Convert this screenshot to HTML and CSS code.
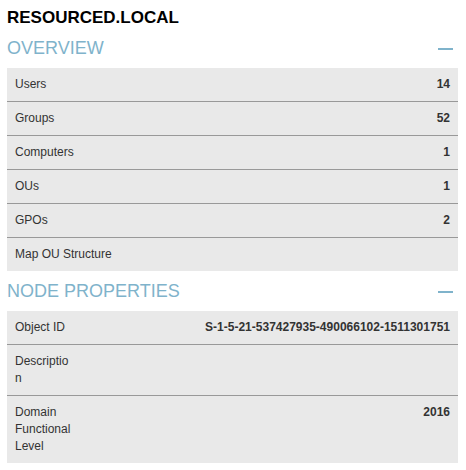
FILE: index.html
```html
<!DOCTYPE html>
<html>
<head>
<meta charset="utf-8">
<link rel="stylesheet" href="styles.css">
</head>
<body>
<div class="panel">
  <h3 class="title">RESOURCED.LOCAL</h3>
  <div class="section-head">
    <span class="section-title">OVERVIEW</span>
    <span class="collapse"></span>
  </div>
  <div class="table">
    <div class="row"><div class="label">Users</div><div class="value">14</div></div>
    <div class="row"><div class="label">Groups</div><div class="value">52</div></div>
    <div class="row"><div class="label">Computers</div><div class="value">1</div></div>
    <div class="row"><div class="label">OUs</div><div class="value">1</div></div>
    <div class="row"><div class="label">GPOs</div><div class="value">2</div></div>
    <div class="row"><div class="label wide">Map OU Structure</div><div class="value"></div></div>
  </div>
  <div class="section-head">
    <span class="section-title">NODE PROPERTIES</span>
    <span class="collapse"></span>
  </div>
  <div class="table">
    <div class="row"><div class="label">Object ID</div><div class="value">S-1-5-21-537427935-490066102-1511301751</div></div>
    <div class="row"><div class="label">Description</div><div class="value"></div></div>
    <div class="row"><div class="label">Domain Functional Level</div><div class="value">2016</div></div>
  </div>
</div>
</body>
</html>
```
FILE: styles.css
```css
html, body {
  margin: 0;
  padding: 0;
  background: #fff;
}
body {
  font-family: "Liberation Sans", Arial, sans-serif;
  color: #333;
}
.panel {
  padding: 0 8px 0 7px;
}
.title {
  margin: 0;
  padding-top: 8px;
  font-size: 17px;
  line-height: 20px;
  font-weight: bold;
  color: #000;
}
.section-head {
  display: flex;
  justify-content: space-between;
  align-items: center;
  height: 40px;
}
.section-title {
  font-size: 18px;
  line-height: 20px;
  color: #7fb3cb;
}
.collapse {
  width: 15px;
  height: 2px;
  background: #7fb3cb;
  margin-right: 5px;
  margin-top: 2px;
}
.table {
  background: #e9e9e9;
}
.row {
  display: flex;
  justify-content: space-between;
  align-items: flex-start;
  font-size: 12px;
  line-height: 17px;
  border-top: 1px solid #999;
}
.row:first-child {
  border-top: none;
}
.label {
  padding: 8px;
  width: 60px;
  flex: none;
  color: #333;
  overflow-wrap: anywhere;
}
.label.wide {
  width: auto;
}
.value {
  padding: 8px;
  font-weight: bold;
  text-align: right;
  color: #333;
}
```
